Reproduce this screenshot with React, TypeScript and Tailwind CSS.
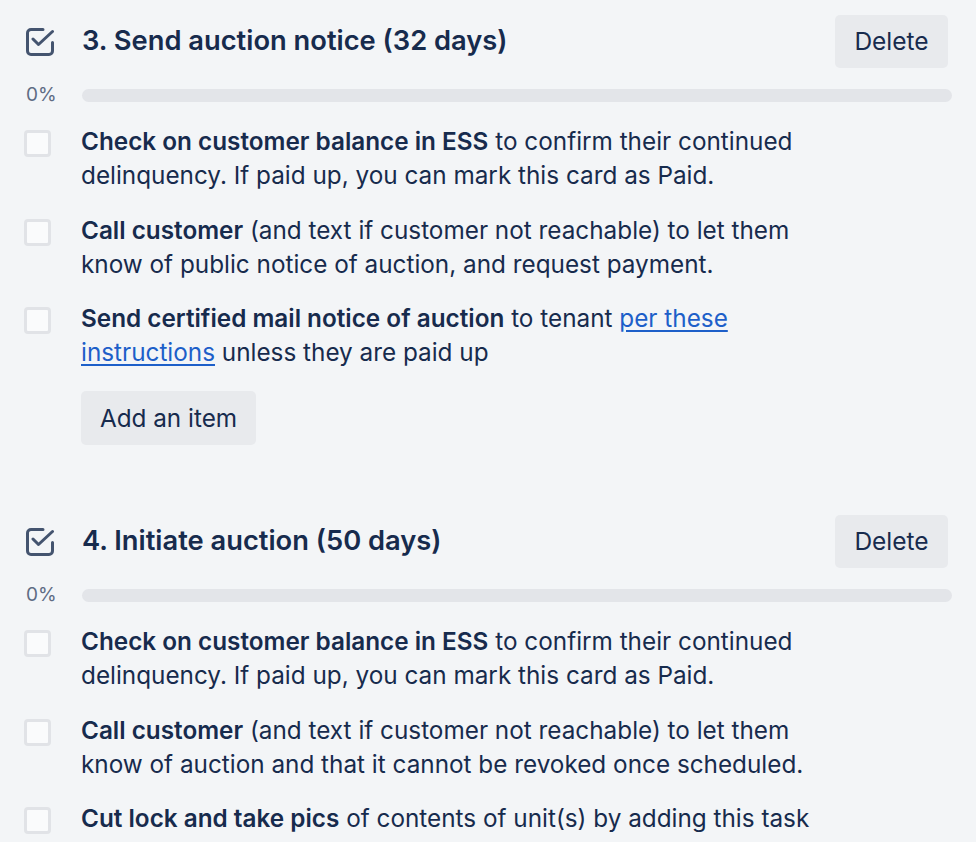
import React from 'react';

type Item = { bold: string; rest: React.ReactNode };

function ChecklistIcon() {
  return (
    <svg width="28" height="28" viewBox="0 0 28 28" fill="none" stroke="#44546f" strokeWidth="3" strokeLinecap="round" strokeLinejoin="round">
      <path d="M17 1.5H5A3.5 3.5 0 0 0 1.5 5v18A3.5 3.5 0 0 0 5 26.5h18a3.5 3.5 0 0 0 3.5-3.5v-8.5" />
      <path d="M7 11l5.5 5.5L26.5 3.5" />
    </svg>
  );
}

function Box() {
  return <div className="w-[27px] h-[27px] shrink-0 rounded-[4px] border-[3px] border-[#e1e3e7] bg-[#fafbfc]" />;
}

function Checklist({ title, items, addButton }: { title: string; items: Item[]; addButton?: boolean }) {
  return (
    <div className="mb-[70px]">
      <div className="flex items-center h-[53px]">
        <div className="w-[82px] shrink-0 pl-[26px] flex items-center"><ChecklistIcon /></div>
        <h2 className="flex-1 text-[27.3px] font-semibold text-[#172b4d]">{title}</h2>
        <button className="w-[113px] h-[53px] mr-[28px] rounded-[5px] bg-[#e8eaed] text-[24.5px] text-[#172b4d]">Delete</button>
      </div>
      <div className="flex items-center mt-[21px] h-[13px]">
        <div className="w-[82px] shrink-0 pl-[26px] text-[19px] text-[#5e6c84]">0%</div>
        <div className="flex-1 h-[13px] mr-[24px] rounded-full bg-[#e3e5e9]" />
      </div>
      <div className="flex flex-col gap-[20.5px] mt-[22px]">
        {items.map((it, i) => (
          <div key={i} className="flex">
            <div className="w-[81px] shrink-0 pl-[24px] pt-[6px]"><Box /></div>
            <p className="w-[740px] text-[24.3px] leading-[34px] text-[#172b4d]">
              <span className="font-semibold">{it.bold}</span> {it.rest}
            </p>
          </div>
        ))}
      </div>
      {addButton && (
        <div className="pl-[81px] mt-[22px]">
          <button className="w-[175px] h-[54px] rounded-[5px] bg-[#e8eaed] text-[24.3px] text-[#172b4d]">Add an item</button>
        </div>
      )}
    </div>
  );
}

export default function App() {
  const s3: Item[] = [
    { bold: 'Check on customer balance in ESS', rest: 'to confirm their continued delinquency. If paid up, you can mark this card as Paid.' },
    { bold: 'Call customer', rest: '(and text if customer not reachable) to let them know of public notice of auction, and request payment.' },
    {
      bold: 'Send certified mail notice of auction',
      rest: (
        <>
          to tenant <a href="#" className="text-[#1d5fc9] underline underline-offset-[3px]">per these instructions</a> unless they are paid up
        </>
      ),
    },
  ];
  const s4: Item[] = [
    { bold: 'Check on customer balance in ESS', rest: 'to confirm their continued delinquency. If paid up, you can mark this card as Paid.' },
    { bold: 'Call customer', rest: '(and text if customer not reachable) to let them know of auction and that it cannot be revoked once scheduled.' },
    { bold: 'Cut lock and take pics', rest: 'of contents of unit(s) by adding this task' },
  ];
  return (
    <div className="h-[842px] bg-[#f3f5f7] pt-[15px] overflow-hidden" style={{ fontFamily: 'Inter, "Noto Sans", sans-serif' }}>
      <Checklist title="3. Send auction notice (32 days)" items={s3} addButton />
      <Checklist title="4. Initiate auction (50 days)" items={s4} />
    </div>
  );
}
